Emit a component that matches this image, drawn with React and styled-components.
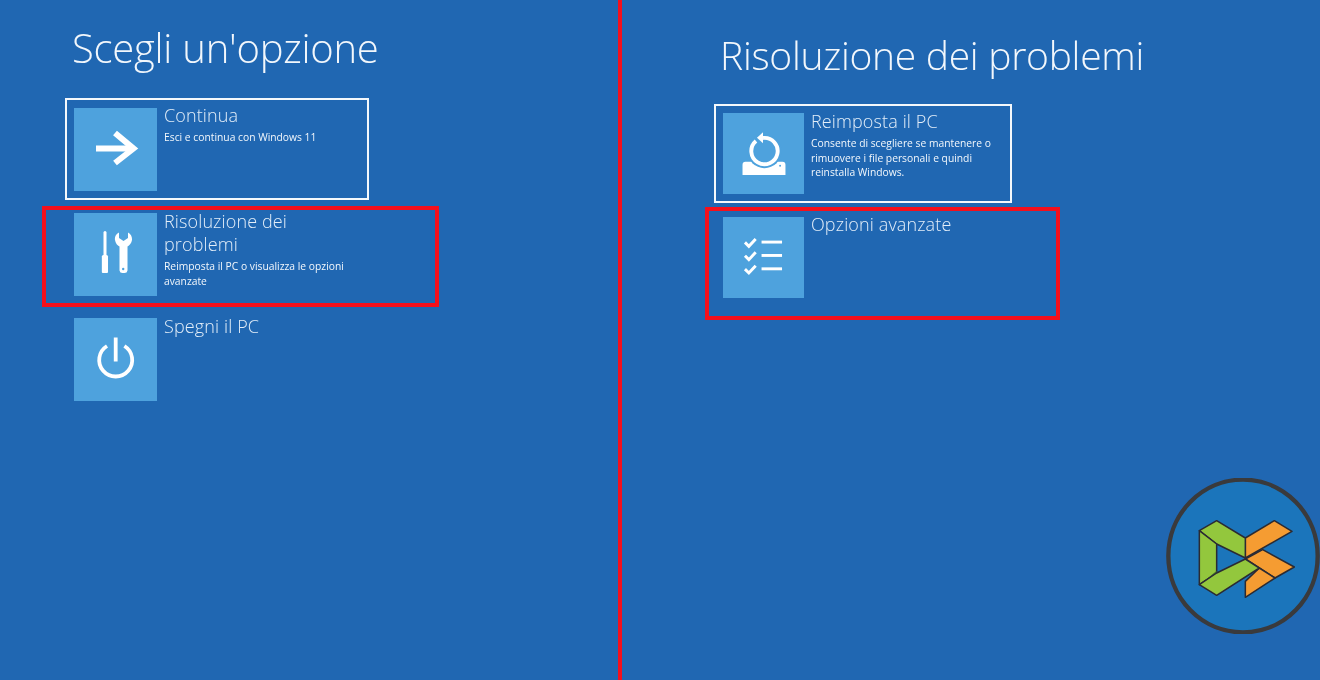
import React from 'react'
import styled, { createGlobalStyle } from 'styled-components'

const Global = createGlobalStyle`
  html, body { margin: 0; padding: 0; background: #2067b2; }
  body { font-family: "Open Sans", "Liberation Sans", sans-serif; color: #fff; overflow: hidden; }
`

const Page = styled.div`
  position: relative;
  display: flex;
  width: 1320px;
  height: 680px;
  overflow: hidden;
  background: #2067b2;
  filter: blur(0.4px);
`

const Panel = styled.section`
  box-sizing: border-box;
  width: ${p => p.$width};
  padding: ${p => p.$top}px 0 0 ${p => p.$left}px;
`

const Divider = styled.div`
  width: 4px;
  background: #f5101c;
`

const Heading = styled.h1`
  margin: 0 0 ${p => p.$after}px ${p => p.$shift}px;
  height: 48px;
  font-size: ${p => p.$size}px;
  line-height: 48px;
  font-weight: 300;
  letter-spacing: ${p => p.$spacing}px;
  color: #f2f7fc;
  white-space: nowrap;
`

const TileList = styled.div`
  display: flex;
  flex-direction: column;
  gap: ${p => p.$gap}px;
`

const Tile = styled.div`
  position: relative;
  display: flex;
  gap: 7px;
  width: ${p => p.$width}px;
  height: ${p => p.$size}px;

  svg {
    flex: none;
    width: ${p => p.$size}px;
    height: ${p => p.$size}px;
    background: #4ea2dd;
  }
`

const Frame = styled.span`
  position: absolute;
  box-sizing: border-box;
  top: ${p => p.$inset[0]}px;
  right: ${p => p.$inset[1]}px;
  bottom: ${p => p.$inset[2]}px;
  left: ${p => p.$inset[3]}px;
  border: ${p => (p.$red ? '4px solid #f5101c' : '2px solid #f4f8fc')};
  pointer-events: none;
`

const TileText = styled.div`
  flex: 1;
  min-width: 0;
`

const Title = styled.div`
  margin: ${p => (p.$lift ? '-4px 0 1px' : '-3px 0 0')};
  max-width: 150px;
  font-size: 18px;
  line-height: 23px;
  font-weight: 300;
  letter-spacing: 0.12px;
  color: #e3eef9;
  white-space: ${p => (p.$wrap ? 'normal' : 'nowrap')};
`

const Desc = styled.div`
  margin-top: 3px;
  max-width: 190px;
  font-size: 10.3px;
  line-height: 14.5px;
  color: #f2f7fc;
`

const Badge = styled.svg`
  position: absolute;
  left: 1166px;
  top: 478px;
  width: 154px;
  height: 156px;
`

const ArrowIcon = () => (
  <svg viewBox="0 0 83 83">
    <path d="M22 40.5H58" stroke="#fff" strokeWidth="6" fill="none" />
    <path d="M41 25L59.5 40.5L41 55" stroke="#fff" strokeWidth="6" fill="none" />
  </svg>
)

const ToolsIcon = () => (
  <svg viewBox="0 0 83 83">
    <path d="M29.5 19.5a1.5 1.5 0 0 1 3 0V42h-3Z" fill="#fff" />
    <path d="M28 43.5a1.5 1.5 0 0 1 1.5-1.5h3a1.5 1.5 0 0 1 1.5 1.5V59a1 1 0 0 1-1 1h-4a1 1 0 0 1-1-1Z" fill="#fff" transform="translate(-1 0) scale(1.03 1)" />
    <path
      d="M45 19.5C41.5 21 40.5 24.5 41 27C41.5 30.5 43.5 32.5 45.5 33.5V57.5A3 3 0 0 0 48.5 60H50.5A3 3 0 0 0 53.5 57.5V33.5C55.5 32.5 57.5 30 58 27C58.3 24 57 21 54 19.5V25L49.5 28L45 25Z"
      fill="#fff"
    />
    <circle cx="49.2" cy="56" r="1.2" fill="#4ea2dd" />
  </svg>
)

const PowerIcon = () => (
  <svg viewBox="0 0 83 83" fill="none" stroke="#fff">
    <path d="M33 28A16.5 16.5 0 1 0 50.4 28" strokeWidth="3.8" />
    <path d="M41.7 19.5V43.5" strokeWidth="3.8" />
  </svg>
)

const ResetIcon = () => (
  <svg viewBox="0 0 83 83">
    <path d="M23 50H61A3 3 0 0 1 64 53V63.5H20V53A3 3 0 0 1 23 50Z" fill="#fff" />
    <circle cx="42.5" cy="39" r="17.5" fill="#4ea2dd" />
    <path d="M41 25.6A13.5 13.5 0 1 1 33.8 28.7" fill="none" stroke="#fff" strokeWidth="4" />
    <path d="M34.8 25.3L41 19.8V31Z" fill="#fff" />
    <circle cx="58.5" cy="54" r="1" fill="#4ea2dd" />
  </svg>
)

const ChecksIcon = () => (
  <svg viewBox="0 0 83 83" fill="none" stroke="#fff" strokeWidth="3">
    {[0, 13.7, 27.4].map(y => (
      <g key={y} transform={`translate(0 ${y})`}>
        <path d="M22.5 26L26.5 30L33.5 22.5" />
        <path d="M39.5 25.7H60.5" />
      </g>
    ))}
  </svg>
)

const Logo = () => (
  <Badge viewBox="47 40 458 468">
    <ellipse cx="276" cy="274" rx="224" ry="229" fill="#1b75bb" stroke="#3a3a3c" strokeWidth="13" />
    <g stroke="#2b2b33" strokeWidth="4.5" strokeLinejoin="round">
      <path d="M283 220L370 168L423 200L283 280Z" fill="#f59c32" />
      <path d="M283 283L335 255L430 307L372 340Z" fill="#f59c32" />
      <path d="M325 310L372 340L283 398V350Z" fill="#f59c32" />
      <path d="M145 198L197 168L283 220V280L197 238Z" fill="#93c73d" />
      <path d="M145 198L197 238V325L145 360Z" fill="#93c73d" />
      <path d="M197 318V325L152 356Z" fill="#3f6f2a" stroke="none" />
      <path d="M145 360L197 325L283 283L325 310L197 392Z" fill="#93c73d" />
    </g>
  </Badge>
)

export default function App() {
  return (
    <Page>
      <Global />
      <Panel $width="618px" $top={24} $left={74}>
        <Heading $size={40} $spacing={-0.25} $after={36} $shift={-2}>Scegli un'opzione</Heading>
        <TileList $gap={22}>
          <Tile $size={83} $width={295}>
            <ArrowIcon />
            <TileText>
              <Title $lift>Continua</Title>
              <Desc>Esci e continua con Windows 11</Desc>
            </TileText>
            <Frame $inset={[-10, 0, -9, -9]} />
          </Tile>
          <Tile $size={83} $width={295}>
            <ToolsIcon />
            <TileText>
              <Title $wrap>Risoluzione dei problemi</Title>
              <Desc>Reimposta il PC o visualizza le opzioni avanzate</Desc>
            </TileText>
            <Frame $red $inset={[-7, -70, -11, -32]} />
          </Tile>
          <Tile $size={83} $width={295}>
            <PowerIcon />
            <TileText>
              <Title>Spegni il PC</Title>
            </TileText>
          </Tile>
        </TileList>
      </Panel>
      <Divider />
      <Panel $width="698px" $top={31} $left={101}>
        <Heading $size={39} $spacing={-0.28} $after={34} $shift={-3}>Risoluzione dei problemi</Heading>
        <TileList $gap={23}>
          <Tile $size={81} $width={289}>
            <ResetIcon />
            <TileText>
              <Title>Reimposta il PC</Title>
              <Desc>Consente di scegliere se mantenere o rimuovere i file personali e quindi reinstalla Windows.</Desc>
            </TileText>
            <Frame $inset={[-9, 0, -9, -9]} />
          </Tile>
          <Tile $size={81} $width={289}>
            <ChecksIcon />
            <TileText>
              <Title $lift>Opzioni avanzate</Title>
            </TileText>
            <Frame $red $inset={[-10, -48, -22, -18]} />
          </Tile>
        </TileList>
      </Panel>
      <Logo />
    </Page>
  )
}
